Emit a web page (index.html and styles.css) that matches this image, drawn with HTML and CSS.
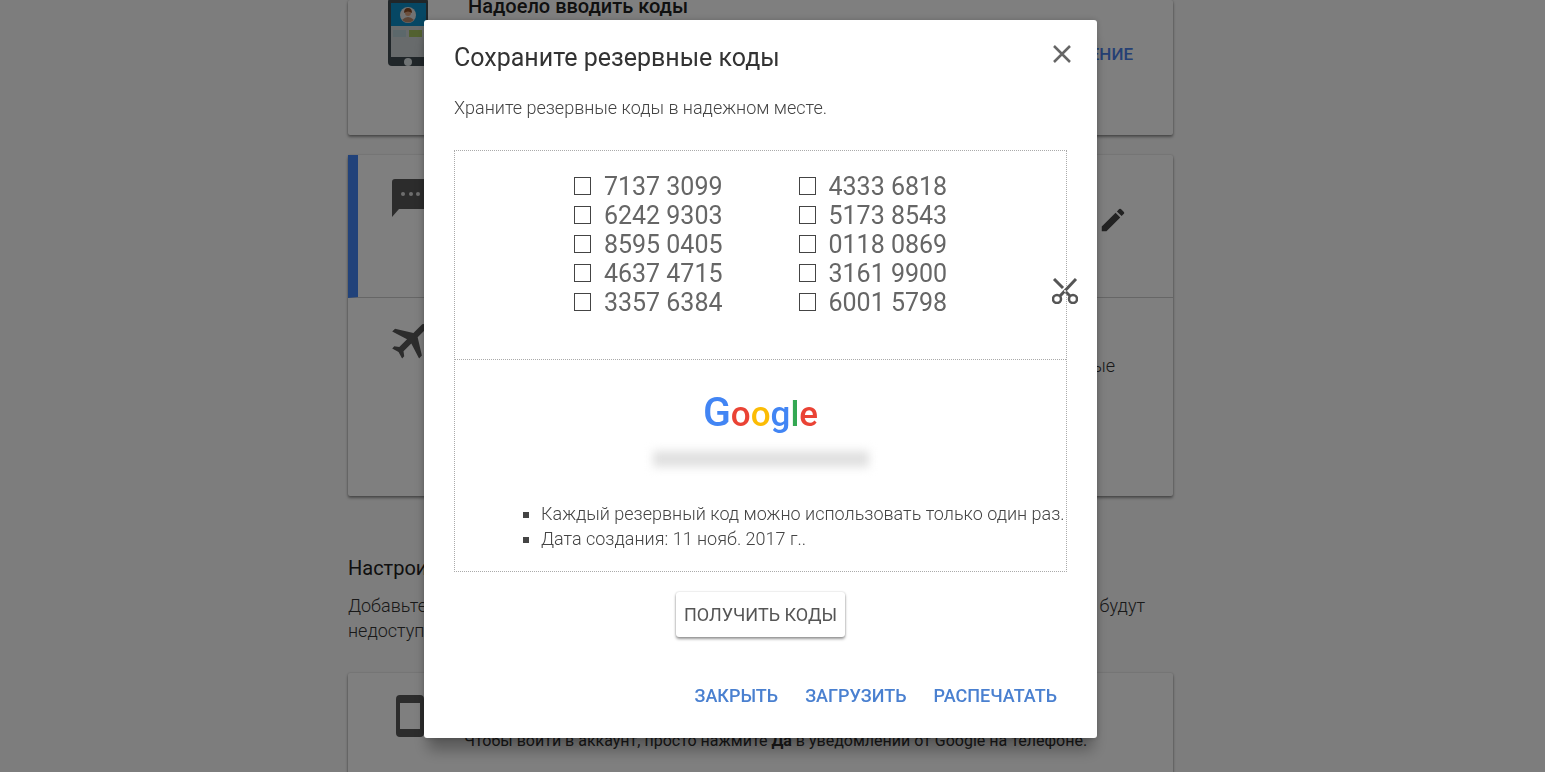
FILE: index.html
```
<!DOCTYPE html>
<html lang="ru">
<head>
  <meta charset="UTF-8">
  <meta name="viewport" content="width=device-width, initial-scale=1.0">
  <title>Резервные коды</title>
  <link rel="stylesheet" href="styles.css">
</head>
<body>
  <main class="page">
    <section class="card prompt-card">
      <svg class="phone-picture" width="40" height="68" viewBox="0 0 40 68">
        <rect width="40" height="68" rx="4" fill="#414c52"/>
        <rect x="3" y="5" width="35" height="54" fill="#d0d6d8"/>
        <rect x="3" y="5" width="35" height="23" fill="#0d8fc8"/>
        <circle cx="20" cy="17" r="8" fill="#e4e4e4"/>
        <path d="M14 22q6-6 12 0q-6 5-12 0z" fill="#b98a6c"/>
        <circle cx="20" cy="15" r="3" fill="#d9a07c"/>
        <path d="M16 15q0-5 4-5t4 5q-4-3-8 0z" fill="#8a4a22"/>
        <rect x="5" y="32" width="13" height="7" fill="#b8d0d6"/>
        <rect x="21" y="32" width="13" height="7" fill="#a5c261"/>
        <circle cx="20" cy="64" r="4" fill="#dfe6e8"/>
      </svg>
      <h3>Надоело вводить коды</h3>
      <a href="#" class="card-link">ПРИЛОЖЕНИЕ</a>
    </section>

    <section class="card">
      <div class="method active">
        <svg class="method-icon" width="44" height="38" viewBox="0 0 44 38">
          <path d="M3 0h38q3 0 3 3v24q0 3-3 3H7l-7 8V3q0-3 3-3z" fill="#585858"/>
          <circle cx="11" cy="15" r="2" fill="#ddd"/>
          <circle cx="19" cy="15" r="2" fill="#ddd"/>
          <circle cx="26" cy="15" r="2" fill="#ddd"/>
        </svg>
        <button type="button" class="edit" aria-label="Изменить">
          <svg width="30" height="30" viewBox="0 0 24 24"><path d="M3 17.250V21h3.750L17.810 9.940l-3.750-3.750L3 17.250zM20.710 7.040a1 1 0 0 0 0-1.410l-2.340-2.340a1 1 0 0 0-1.410 0l-1.830 1.830 3.750 3.750 1.830-1.830z" fill="#444"/></svg>
        </button>
      </div>
      <div class="method">
        <svg class="method-icon" width="48" height="48" viewBox="0 0 24 24">
          <path transform="rotate(45 12 12)" d="M21 16v-2l-8-5V3.500a1.500 1.500 0 0 0-3 0V9l-8 5v2l8-2.500V19l-2 1.500V22l3.500-1 3.500 1v-1.500L13 19v-5.500l8 2.500z" fill="#585858"/>
        </svg>
        <p class="method-text">Резервные</p>
      </div>
    </section>

    <h2>Настроить дополнительный способ</h2>
    <p class="intro">Добавьте дополнительный способ входа в свой аккаунт на случай, если другие варианты будут недоступны.</p>

    <section class="card phone-card">
      <svg class="phone-icon" width="28" height="42" viewBox="0 0 28 42">
        <path fill-rule="evenodd" d="M4 0h20q4 0 4 4v34q0 4-4 4H4q-4 0-4-4V4q0-4 4-4zM4 8v26h20V8z" fill="#585858"/>
      </svg>
      <p>Чтобы войти в аккаунт, просто нажмите <b>Да</b> в уведомлении от Google на телефоне.</p>
    </section>
  </main>

  <div class="overlay">
    <div class="dialog" role="dialog" aria-labelledby="dialog-title">
      <header>
        <h1 id="dialog-title">Сохраните резервные коды</h1>
        <button type="button" class="close" aria-label="Закрыть окно">
          <svg width="18" height="18" viewBox="0 0 18 18"><path d="M1 1l16 16M17 1L1 17" stroke="#666" stroke-width="2.500"/></svg>
        </button>
      </header>
      <p class="hint">Храните резервные коды в надежном месте.</p>

      <div class="coupon">
        <div class="codes">
          <label><input type="checkbox">7137 3099</label>
          <label><input type="checkbox">4333 6818</label>
          <label><input type="checkbox">6242 9303</label>
          <label><input type="checkbox">5173 8543</label>
          <label><input type="checkbox">8595 0405</label>
          <label><input type="checkbox">0118 0869</label>
          <label><input type="checkbox">4637 4715</label>
          <label><input type="checkbox">3161 9900</label>
          <label><input type="checkbox">3357 6384</label>
          <label><input type="checkbox">6001 5798</label>
        </div>
        <svg class="scissors" width="26" height="26" viewBox="0 0 26 26" fill="none" stroke="#555">
          <path d="M2 1l9 9" stroke-width="3"/>
          <path d="M24 1L8 18" stroke-width="3"/>
          <path d="M14 14l4 4" stroke-width="3"/>
          <circle cx="5" cy="21" r="4" stroke-width="2.500"/>
          <circle cx="21" cy="21" r="4" stroke-width="2.500"/>
          <circle cx="13" cy="13" r="1" fill="#fff" stroke="none"/>
        </svg>
        <div class="about">
          <div class="logo"><span class="blue cap">G</span><span class="red">o</span><span class="yellow">o</span><span class="blue">g</span><span class="green">l</span><span class="red">e</span></div>
          <div class="account"></div>
          <ul>
            <li>Каждый резервный код можно использовать только один раз.</li>
            <li>Дата создания: 11 нояб. 2017 г..</li>
          </ul>
        </div>
      </div>

      <button type="button" class="get-codes">ПОЛУЧИТЬ КОДЫ</button>

      <div class="actions">
        <button type="button">ЗАКРЫТЬ</button>
        <button type="button">ЗАГРУЗИТЬ</button>
        <button type="button">РАСПЕЧАТАТЬ</button>
      </div>
    </div>
  </div>
</body>
</html>
```
FILE: styles.css
```
* {
  box-sizing: border-box;
}

body {
  margin: 0;
  padding-right: 24px;
  height: 100vh;
  overflow: hidden;
  font-family: Roboto, "Liberation Sans", sans-serif;
  font-size: 18px;
  font-weight: 300;
  line-height: 25px;
  color: #333;
  background: #fafafa;
}

h1, h2, h3, p, ul {
  margin: 0;
}

button {
  font: inherit;
  padding: 0;
  border: none;
  background: none;
  cursor: pointer;
}

svg {
  display: block;
  flex-shrink: 0;
}

/* page under the dialog */
.page {
  max-width: 825px;
  margin: 0 auto;
}

.card {
  background: #fff;
  border-radius: 2px;
  box-shadow: 0 2px 3px rgba(0, 0, 0, 0.4), 0 0 2px rgba(0, 0, 0, 0.2);
  margin-bottom: 20px;
}

.prompt-card {
  height: 135px;
  padding: 0 40px;
  display: flex;
  align-items: flex-start;
}

.phone-picture {
  margin-top: -2px;
}

.prompt-card h3 {
  flex: 1;
  margin: -6px 0 0 40px;
  font-size: 20px;
  font-weight: 500;
  color: #212121;
}

.card-link {
  margin-top: 42px;
  font-size: 17px;
  font-weight: 500;
  color: #4a80e8;
  text-decoration: none;
}

.method {
  height: 198px;
  padding: 18px 40px;
  display: flex;
  align-items: flex-start;
  justify-content: space-between;
}

.method.active {
  height: 143px;
  padding: 24px 45px 0 34px;
  border-left: 10px solid #4285f4;
  border-bottom: 1px solid #ccc;
}

.edit {
  margin-top: 26px;
}

.method-text {
  margin: 37px 18px 0 0;
}

h2 {
  margin-top: 60px;
  font-size: 20px;
  font-weight: 400;
  color: #212121;
}

.intro {
  margin: 12px 0 30px;
}

.phone-card {
  height: 140px;
  display: flex;
  padding: 22px 48px;
}

.phone-card p {
  margin: 33px 0 0 40px;
  font-size: 16px;
  font-weight: 400;
  white-space: nowrap;
}

/* dialog */
.overlay {
  position: fixed;
  top: 0;
  left: 0;
  right: 0;
  bottom: 0;
  padding: 20px 24px 0 0;
  background: rgba(0, 0, 0, 0.5);
}

.dialog {
  max-width: 673px;
  margin: 0 auto;
  padding: 25px 30px 30px;
  color: #444;
  background: #fff;
  border-radius: 3px;
  box-shadow: 0 16px 14px -4px rgba(0, 0, 0, 0.3), 0 0 6px rgba(0, 0, 0, 0.2);
}

.dialog header {
  display: flex;
  justify-content: space-between;
  align-items: flex-start;
}

.dialog h1 {
  font-size: 25px;
  line-height: 25px;
  font-weight: 400;
  color: #333;
}

.close {
  margin-right: -4px;
}

.hint {
  margin: 25px 0 30px;
}

.coupon {
  position: relative;
  border: 1px dotted #aaa;
}

.codes {
  display: grid;
  grid-template-columns: auto auto;
  justify-content: center;
  column-gap: 76px;
  padding: 21px 0 42px;
  border-bottom: 1px dotted #aaa;
}

.codes label {
  display: flex;
  align-items: center;
  font-size: 25px;
  font-weight: 400;
  line-height: 29px;
  color: #666;
}

.codes input {
  appearance: none;
  width: 17px;
  height: 18px;
  margin: 0 13px 1px 0;
  border: 1px solid #444;
}

.scissors {
  position: absolute;
  top: 127px;
  right: -12px;
}

.about {
  padding: 27px 0 20px;
}

.logo {
  height: 50px;
  text-align: center;
  font-size: 35px;
  line-height: 50px;
  font-weight: 500;
}

.cap {
  font-size: 41px;
}

.blue { color: #4285f4; }
.red { color: #ea4335; }
.yellow { color: #fbbc05; }
.green { color: #34a853; }

/* blurred e-mail */
.account {
  width: 216px;
  height: 16px;
  margin: 14px auto 34px;
  background: #e0e0e0;
  filter: blur(5px);
}

.about ul {
  padding-left: 86px;
  list-style: square;
  white-space: nowrap;
}

.get-codes {
  display: block;
  margin: 20px auto 46px;
  padding: 10px 8px;
  border-radius: 3px;
  font-weight: 400;
  color: #555;
  box-shadow: 0 2px 3px rgba(0, 0, 0, 0.4), 0 0 2px rgba(0, 0, 0, 0.2);
}

.actions {
  display: flex;
  justify-content: flex-end;
  gap: 27px;
  padding-right: 10px;
}

.actions button {
  font-weight: 500;
  color: #4a80d0;
}
```
